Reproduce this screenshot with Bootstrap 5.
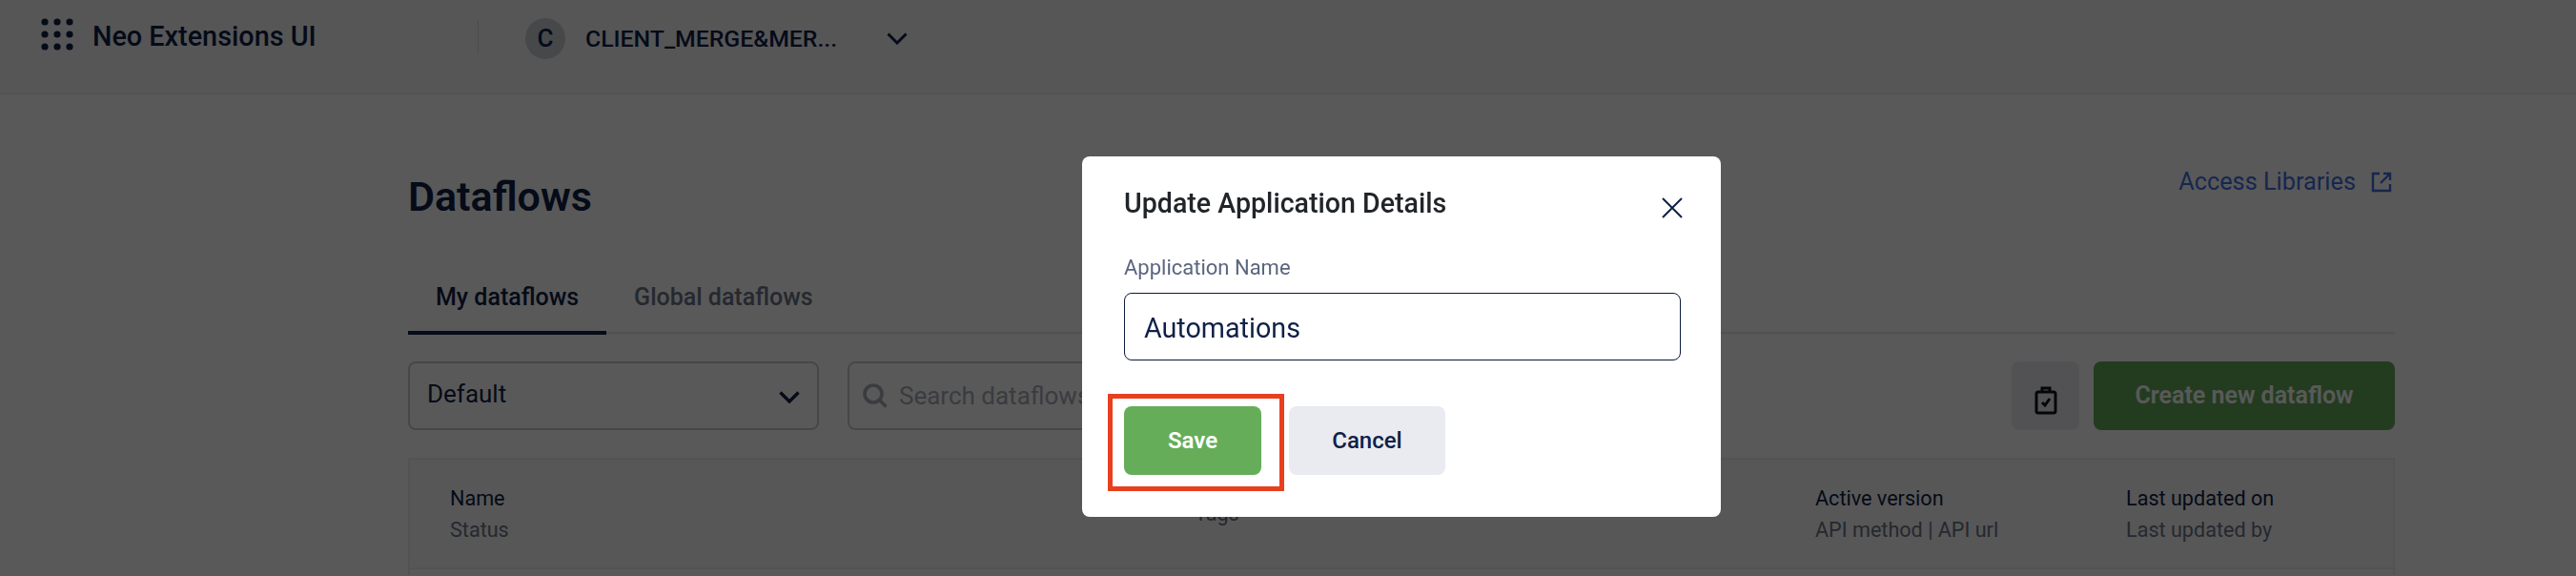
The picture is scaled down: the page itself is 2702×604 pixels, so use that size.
<!DOCTYPE html>
<html lang="en">
<head>
    <meta charset="UTF-8">
    <meta name="viewport" content="width=device-width, initial-scale=1.0">
    <title>Dataflows</title>
    <link rel="stylesheet" href="https://cdn.jsdelivr.net/npm/bootstrap@5.3.0/dist/css/bootstrap.min.css">
    <style>
        html, body { height: 604px; overflow: hidden; }
        body { font-family: Roboto, "Liberation Sans", sans-serif; color: #0f2147; background: #fff; }

        /* top bar */
        .top-bar { height: 99px; background: #f7f7f7; border-bottom: 1px solid #e6e6e6; padding: 19px 0 0 43px; align-items: flex-start; }
        .app-title { font-size: 28.8px; line-height: 32px; font-weight: 500; margin-left: 20px; width: 404px; margin-top: 3px; white-space: nowrap; }
        .bar-sep { width: 1px; height: 35px; background: #d9dbe0; margin: 3px 49px 0 0; }
        .client-avatar { width: 42px; height: 43px; border-radius: 50%; background: #c9cdd4; font-size: 26px; font-weight: 500; line-height: 43px; text-align: center; margin-right: 21px; }
        .client-name { font-size: 24.8px; line-height: 43px; font-weight: 500; width: 264px; white-space: nowrap; }
        .client-caret { margin: 15px 0 0 52px; }

        /* page */
        .page-wrap { margin: 0 190px 0 428px; }
        .page-head { height: 194px; padding-top: 83px; }
        .page-title { font-size: 43px; line-height: 48px; font-weight: 600; margin: 0; }
        .libs-link { font-size: 25.3px; line-height: 32px; color: #3f6fe0; text-decoration: none; margin-top: -7px; padding-right: 3px; }
        .flow-tabs { border-bottom: 2px solid #e6e7ea; height: 57px; }
        .flow-tab { font-size: 25px; line-height: 28px; font-weight: 500; padding: 5px 29px 0; height: 58px; color: #6d7486; }
        .flow-tab.on { color: #0f2147; border-bottom: 4px solid #0f2147; }
        .flow-tools { margin-top: 29px; }
        .flow-select { width: 431px; height: 72px; border: 2px solid #c9ccd4; border-radius: 8px; padding: 0 18px 3px 18px; font-size: 26px; }
        .flow-select svg { margin-top: 5px; }
        .flow-search { width: 620px; height: 72px; border: 2px solid #c9ccd4; border-radius: 8px; margin-left: 30px; padding-left: 14px; font-size: 26px; color: #a7abb6; }
        .flow-search span { margin-left: 12px; }
        .clip-btn { width: 71px; height: 72px; background: #eaebf1; border-radius: 8px; padding-top: 14px; }
        .create-btn { width: 316px; height: 72px; margin-left: 15px; background: #65ad59; border-radius: 8px; color: #fff; font-size: 25px; font-weight: 600; }
        .flow-head { margin-top: 29px; height: 117px; background: #f9f9f9; border: 2px solid #eeeef0; font-size: 21.6px; line-height: 33px; padding-top: 24px; }
        .flow-head div div + div { color: #6d7486; }
        .cell-name { margin-left: 42px; width: 781px; }
        .cell-tags { width: 651px; padding-top: 16px; color: #6d7486; }
        .cell-ver { width: 326px; }
        .flow-rest { height: 6px; border: 2px solid #eeeef0; border-top: 0; border-bottom: 0; }

        /* modal */
        .modal-backdrop { --bs-backdrop-opacity: 0.65; }
        .edit-dialog { width: 670px; max-width: none; height: 378px; margin: 164px 0 0 1135px; }
        .edit-dialog .modal-content { height: 378px; border: 0; border-radius: 8px; padding: 31px 40px 0 44px; }
        .edit-title { font-size: 28.6px; line-height: 36px; font-weight: 500; color: #212529; margin: 0; }
        .edit-close { margin-top: 12px; }
        .edit-label { font-size: 22px; line-height: 28px; color: #5b6580; margin: 36px 0 0 0; display: block; }
        .edit-input.form-control { height: 71px; margin-top: 12px; border: 1px solid #0b1a3d; border-radius: 8px; padding: 2px 20px 0 20px; font-size: 28.7px; color: #0f2147; width: 584px; max-width: none; }
        .edit-actions { margin-top: 48px; gap: 29px; }
        .btn-save.btn { width: 144px; height: 72px; background: #65ad59; border: 0; border-radius: 8px; color: #fff; font-size: 24px; font-weight: 600; }
        .btn-cancel.btn { width: 164px; height: 72px; background: #eaebf1; border: 0; border-radius: 8px; color: #0f2147; font-size: 24px; font-weight: 500; }
        .save-mark { position: absolute; left: 27px; top: 249px; width: 185px; height: 102px; border: 5px solid #e8401f; pointer-events: none; }
    </style>
</head>
<body>

    <div class="top-bar d-flex">
        <svg width="34" height="34" viewBox="0 0 34 34" fill="#0f2147">
            <circle cx="4" cy="4" r="3.6"/><circle cx="17" cy="4" r="3.6"/><circle cx="30" cy="4" r="3.6"/>
            <circle cx="4" cy="17" r="3.6"/><circle cx="17" cy="17" r="3.6"/><circle cx="30" cy="17" r="3.6"/>
            <circle cx="4" cy="30" r="3.6"/><circle cx="17" cy="30" r="3.6"/><circle cx="30" cy="30" r="3.6"/>
        </svg>
        <div class="app-title">Neo Extensions UI</div>
        <div class="bar-sep flex-shrink-0"></div>
        <div class="client-avatar">C</div>
        <div class="client-name">CLIENT_MERGE&amp;MER...</div>
        <svg class="client-caret" width="22" height="13" viewBox="0 0 22 13" fill="none" stroke="#0f2147" stroke-width="3"><path d="M1.5 1.5 11 11l9.5-9.5"/></svg>
    </div>

    <div class="page-wrap">
        <div class="page-head d-flex justify-content-between align-items-start">
            <h1 class="page-title">Dataflows</h1>
            <a class="libs-link d-flex align-items-center gap-3" href="#">
                Access Libraries
                <svg width="22" height="22" viewBox="0 0 22 22" fill="none" stroke="#3f6fe0" stroke-width="2.4"><path d="M9 2H2v18h18v-7M13 2h7v7M20 2 10 12"/></svg>
            </a>
        </div>

        <div class="flow-tabs d-flex">
            <div class="flow-tab on">My dataflows</div>
            <div class="flow-tab">Global dataflows</div>
        </div>

        <div class="flow-tools d-flex">
            <div class="flow-select d-flex align-items-center justify-content-between">
                Default
                <svg width="22" height="13" viewBox="0 0 22 13" fill="none" stroke="#0f2147" stroke-width="3.4"><path d="M1.5 1.5 11 11l9.5-9.5"/></svg>
            </div>
            <div class="flow-search d-flex align-items-center">
                <svg width="26" height="26" viewBox="0 0 26 26" fill="none" stroke="#a7abb6" stroke-width="3.6"><circle cx="11" cy="11" r="9"/><path d="m17.5 17.5 7 7"/></svg>
                <span>Search dataflows</span>
            </div>
            <div class="clip-btn ms-auto d-flex justify-content-center">
                <svg width="24" height="44" viewBox="0 0 24 44" fill="none" stroke="#0f1216" stroke-width="3">
                    <rect x="2" y="18" width="20" height="22" rx="2"/>
                    <path d="M8 17v-3h8v3"/>
                    <path d="m8 29 3 3 5-7"/>
                </svg>
            </div>
            <div class="create-btn d-flex align-items-center justify-content-center">Create new dataflow</div>
        </div>

        <div class="flow-head d-flex">
            <div class="cell-name"><div>Name</div><div>Status</div></div>
            <div class="cell-tags">Tags</div>
            <div class="cell-ver"><div>Active version</div><div>API method | API url</div></div>
            <div><div>Last updated on</div><div>Last updated by</div></div>
        </div>
        <div class="flow-rest"></div>
    </div>

    <div class="modal-backdrop show"></div>
    <div class="modal d-block">
        <div class="modal-dialog edit-dialog">
            <div class="modal-content">
                <div class="d-flex justify-content-between align-items-start">
                    <h5 class="edit-title">Update Application Details</h5>
                    <svg class="edit-close" width="22" height="22" viewBox="0 0 22 22" fill="none" stroke="#0f2147" stroke-width="2"><path d="m1 1 20 20M21 1 1 21"/></svg>
                </div>
                <label class="edit-label" for="appName">Application Name</label>
                <input id="appName" class="form-control edit-input" type="text" value="Automations">
                <div class="edit-actions d-flex">
                    <button class="btn btn-save" type="button">Save</button>
                    <button class="btn btn-cancel" type="button">Cancel</button>
                </div>
                <div class="save-mark"></div>
            </div>
        </div>
    </div>

    <script src="https://cdn.jsdelivr.net/npm/bootstrap@5.3.0/dist/js/bootstrap.bundle.min.js"></script>
</body>
</html>
